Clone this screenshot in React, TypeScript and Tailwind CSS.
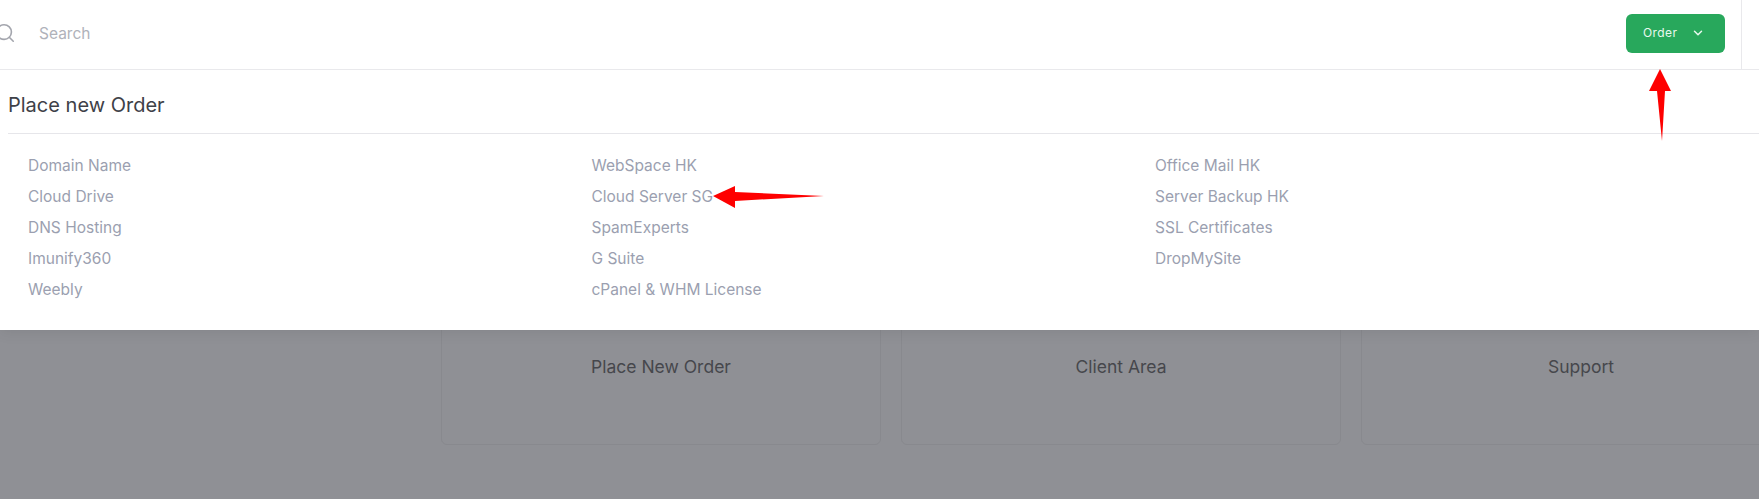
import { ChevronDown, Search } from 'lucide-react';

const columns = [
  ['Domain Name', 'Cloud Drive', 'DNS Hosting', 'Imunify360', 'Weebly'],
  ['WebSpace HK', 'Cloud Server SG', 'SpamExperts', 'G Suite', 'cPanel & WHM License'],
  ['Office Mail HK', 'Server Backup HK', 'SSL Certificates', 'DropMySite'],
];

const cards = ['Place New Order', 'Client Area', 'Support'];

export default function App() {
  return (
    <div className="relative h-[499px] w-[1759px] overflow-hidden bg-[#8f9095] font-['Inter',sans-serif]">
      {/* Top bar */}
      <header className="relative z-20 flex h-[70px] items-center border-b border-[#e9e9ec] bg-white">
        <Search className="mb-[3px] ml-[-6px] h-[22px] w-[22px] text-[#a3a5ad]" strokeWidth={1.75} />
        <span className="mb-[2px] ml-[23px] flex-1 text-[15.5px] text-[#b0b2ba]">Search</span>
        <button className="mb-[2px] flex h-[39px] w-[99px] items-center gap-[14px] rounded-[6px] bg-[#28a85c] pb-[2px] pl-[17px] text-[12px] tracking-[0.4px] text-[#e9f9ef]">
          Order
          <ChevronDown className="h-[14px] w-[14px]" strokeWidth={2.5} />
        </button>
        <div className="ml-[16px] h-full w-px bg-[#e9e9ec]" />
        <div className="w-[17px]" />
      </header>

      {/* Order menu */}
      <section className="relative z-10 h-[260px] bg-white pl-[8px] shadow-[0_2px_14px_rgba(0,0,0,0.08)]">
        <h2 className="flex h-[64px] items-center border-b border-[#e6e6ea] pt-[6px] text-[20px] text-[#3e4148]">
          Place new Order
        </h2>
        <div className="flex pl-[20px] pt-[16px]">
          {columns.map((items) => (
            <ul key={items[0]} className="w-[563.5px] shrink-0">
              {items.map((item) => (
                <li key={item} className="h-[31px] text-[15.5px] leading-[31px] text-[#9b9fb0]">
                  {item}
                </li>
              ))}
            </ul>
          ))}
        </div>
      </section>

      {/* Dimmed page behind the menu */}
      <div className="flex gap-[20px] pl-[441px]">
        {cards.map((card) => (
          <div
            key={card}
            className="mt-[-10px] h-[125px] w-[440px] shrink-0 rounded-[6px] border border-[#88898e] pt-[33px] text-center text-[17.5px] text-[#46474c]"
          >
            {card}
          </div>
        ))}
      </div>

      {/* Annotation arrows */}
      <svg className="absolute left-0 top-0 z-30" width="1759" height="499" viewBox="0 0 1759 499">
        <path d="M1660 69 L1671 91 L1665 91 L1662 141 L1657 91 L1649 91 Z" fill="#fe0000" />
        <path d="M713 196 L735 186 L735 192 L824 196 L735 201 L735 208 Z" fill="#fe0000" />
      </svg>
    </div>
  );
}
